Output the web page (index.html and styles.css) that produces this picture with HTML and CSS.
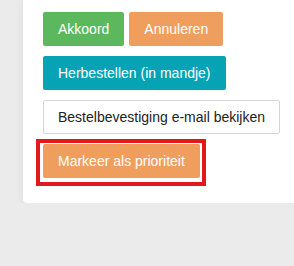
FILE: index.html
```html
<!DOCTYPE html>
<html lang="nl">
<head>
    <meta charset="UTF-8">
    <meta name="viewport" content="width=device-width, initial-scale=1.0">
    <title>Bestelling</title>
    <link rel="stylesheet" href="styles.css">
</head>
<body>
    <div class="order-card">
        <div class="btn-row">
            <a href="#" class="btn btn-success">Akkoord</a>
            <a href="#" class="btn btn-warning">Annuleren</a>
        </div>
        <div class="btn-row">
            <a href="#" class="btn btn-info">Herbestellen (in mandje)</a>
        </div>
        <div class="btn-row">
            <a href="#" class="btn btn-default">Bestelbevestiging e-mail bekijken</a>
        </div>
        <div class="highlight-box">
            <a href="#" class="btn btn-warning">Markeer als prioriteit</a>
        </div>
    </div>
</body>
</html>
```

FILE: styles.css
```css
body {
    margin: 0;
    padding-left: 23px;
    background-color: #ebebeb;
    font-family: "Liberation Sans", Arial, sans-serif;
    overflow: hidden;
}

.order-card {
    background-color: white;
    border-radius: 0 0 0 4px;
    box-shadow: 0 3px 10px rgba(0, 0, 0, 0.07);
    padding: 12px 0 17px 20px;
    display: flex;
    flex-direction: column;
    align-items: flex-start;
}

.btn-row {
    display: flex;
    gap: 5px;
    margin-bottom: 10px;
}

.btn-row:nth-child(3) {
    margin-bottom: 5px;
}

.btn {
    display: inline-block;
    padding: 6px 14px;
    font-size: 14px;
    line-height: 20px;
    border: 1px solid transparent;
    border-radius: 2px;
    color: white;
    text-decoration: none;
    white-space: nowrap;
}

.btn-success {
    background-color: #5cb85c;
}

.btn-warning {
    background-color: #f09e5e;
}

.btn-info {
    background-color: #05a3b4;
}

.btn-default {
    background-color: white;
    border-color: #d6d6d6;
    color: #222;
}

.highlight-box {
    border: 4px solid #e2191c;
    padding: 1px 2px 4px 3px;
    margin-left: -7px;
}
```
